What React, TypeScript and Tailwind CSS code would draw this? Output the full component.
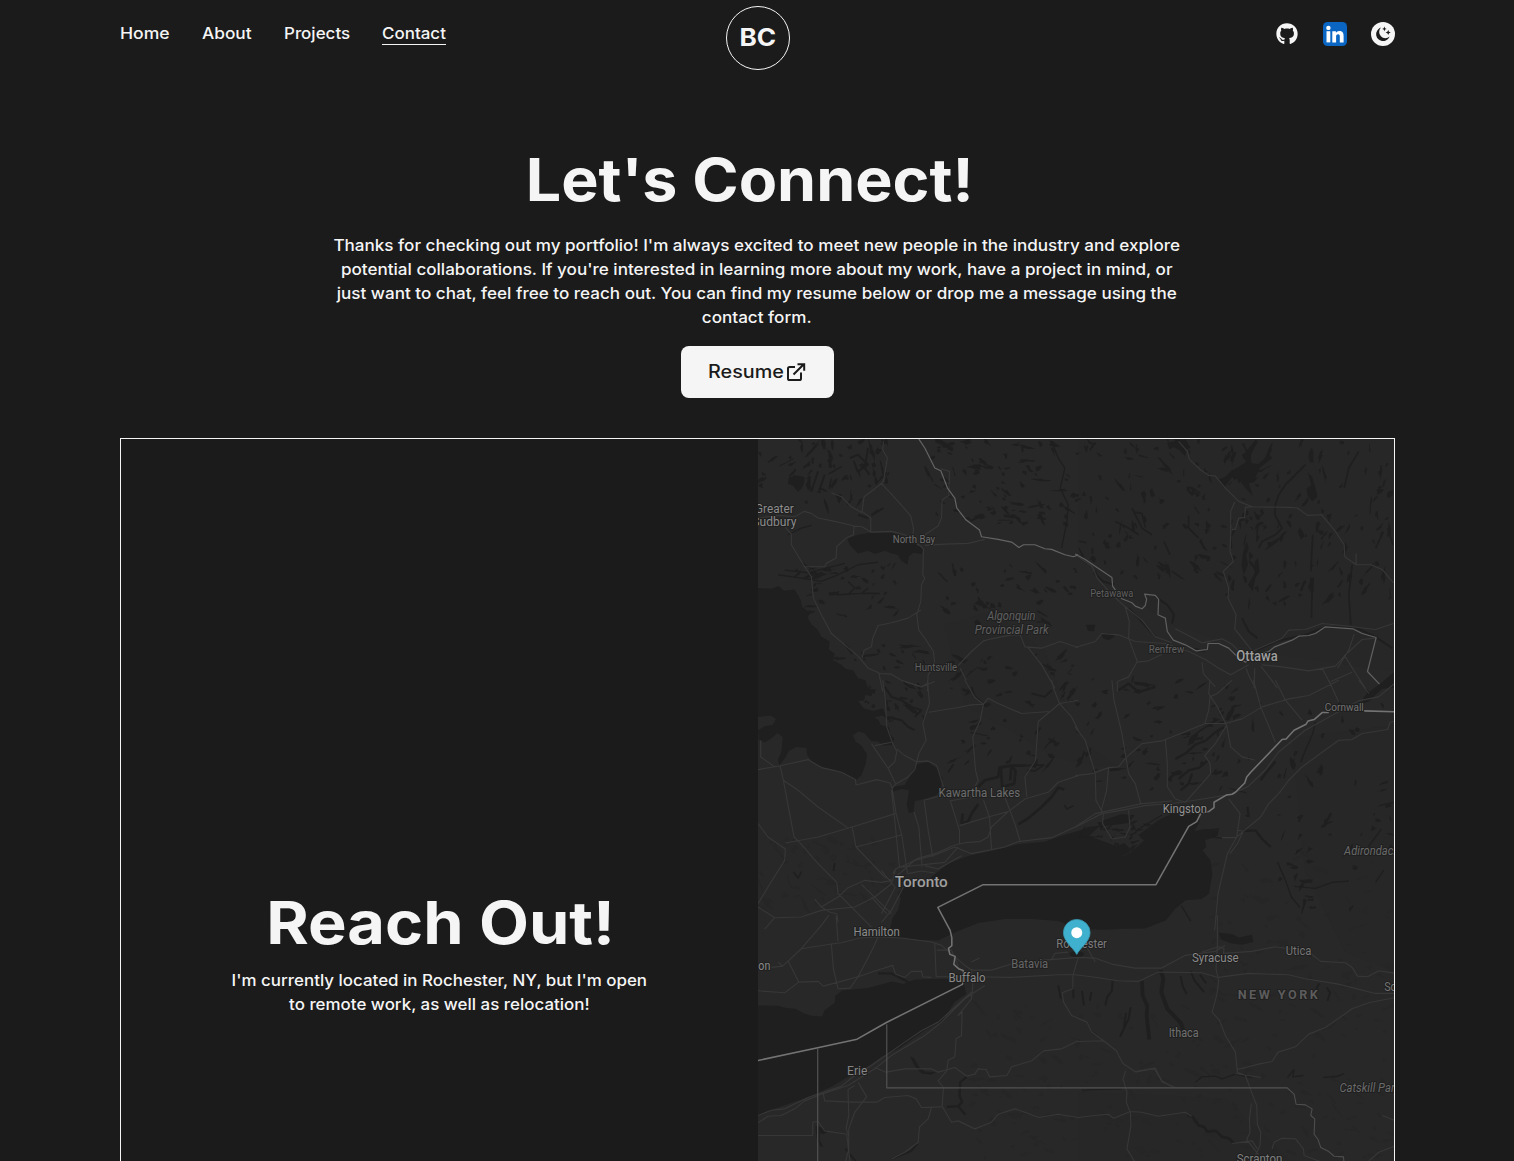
import React from "react";
import { FaGithub } from "react-icons/fa";

const OFFSETS = {
  nw: "translate(0 0)",
  ne: "translate(951 0)",
  w: "translate(0 726)",
  e: "translate(951 726)",
  sw: "translate(0 1431)",
  se: "translate(951 1431)",
};
type Region = keyof typeof OFFSETS;

const WATER = "#1f1f1f";

const waterShapes: [Region, string][] = [
  ["w", "M0 -276L40 -274L62 -282L78 -268L110 -272L128 -240L132 -220L150 -206L150 -186L160 -168L180 -150L190 -130L215 -116L212 -92L230 -80L225 -60L250 -46L262 -34L285 -30L300 -6L322 0L328 20L345 30L340 48L322 44L318 60L300 62L316 84L346 92L374 84L384 104L350 110L368 134L392 140L396 160L408 176L402 194L370 196L362 184L340 182L318 158L300 154L284 166L292 184L310 196L327 222L323 250L310 285L293 300L262 280L225 267L195 262L160 242L148 225L145 203L115 200L92 212L82 232L64 256L60 238L70 215L74 170L58 158L44 172L22 186L2 180L0 150L20 138L44 134L54 116L38 106L0 110Z"],
  ["w", "M402 320L440 314L476 252L510 245L536 264L553 295L548 322L535 345L505 355L470 362L466 395L452 398L446 372L453 330L430 326L405 334Z"],
  ["nw", "M268 302L300 290L330 285L400 283L462 305L480 322L496 334L490 348L466 344L452 356L448 380L430 368L418 350L400 346L380 338L350 348L330 338L300 346L276 322Z"],
  ["nw", "M92 120L110 112L138 116L140 130L132 150L120 162L104 142L90 138Z"],
  ["w", "M396 745L404 712L420 690L428 655L420 640L440 612L500 606L545 570L572 548L640 524L700 512L780 492L860 484L905 468L960 452L991 440L1020 436L1035 420L1090 402L1130 404L1110 428L1020 440L992 468L1050 488L1070 500L1098 488L1120 510L1084 532L1120 514L1158 480L1140 465L1200 420L1240 400L1290 404L1318 396L1324 424L1308 452L1340 446L1380 452L1378 466L1340 480L1344 500L1332 510L1356 540L1362 580L1352 640L1330 656L1282 660L1252 684L1222 720L1160 744L1096 745L1040 748L960 746L900 722L820 716L740 716L660 728L600 752L540 780L480 778L420 772L375 766L366 752Z"],
  ["sw", "M0 270L60 271L84 278L112 280L138 294L160 301L192 303L199 285L230 262L232 242L252 225L330 218L402 198L436 206L470 192L560 190L616 200L624 236L590 260L570 290L552 318L498 346L424 398L370 424L330 452L290 472L222 512L180 532L130 552L60 576L20 592L0 602Z"],
  ["e", "M858 72L866 50L888 30L920 6L960 -28L960 22L920 26L896 48L880 64Z"],
  ["ne", "M430 124L448 118L468 98L488 88L512 72L504 50L520 30L540 6L548 10L526 50L528 76L548 78L582 50L590 60L550 92L536 128L520 134L532 174L508 148L490 124L470 118L445 150Z"],
  ["ne", "M275 14L330 4L346 30L318 40L296 28L282 34Z"],
  ["ne", "M514 310L520 330L512 352L518 380L505 410L498 382L504 340Z"],
  ["ne", "M548 360L552 400L540 420L532 460L518 440L530 420L540 400L538 372Z"],
  ["ne", "M704 420L716 418L714 462L705 464Z M694 150L718 140L726 176L710 190L696 170Z"],
  ["ne", "M78 590L100 584L120 594L100 606L84 600Z M32 560L60 560L56 580L38 578Z"],
  ["se", "M430 52L470 56L490 66L530 58L534 80L500 88L470 84L436 72Z"],
  ["sw", "M456 422L468 428L484 456L500 468L534 470L520 478L490 474L470 452Z M172 632L190 636L210 648L196 656L186 652L184 672L196 694L186 692L176 668Z M170 500L200 510L200 500Z"],
];

const lakeStrokes: [Region, number, string][] = [
  ["se", 11, "M200 196L202 240L216 272L214 300L222 372"],
  ["se", 12, "M256 164L264 190L258 230L276 280L316 322L324 344"],
  ["se", 6, "M112 196L110 226L96 244L90 270 M316 182L322 212L334 236 M346 168L358 196L386 230 M374 178L392 204 M166 276L160 310L134 364 M152 292L146 336 M20 226L26 270 M48 230L44 256 M754 216L764 232L756 256 M732 204L722 220"],
  ["sw", 7, "M360 174L400 174L440 194L452 202 M606 500L604 540L612 560L600 572L622 598 M626 484L606 500 M600 572L566 574"],
  ["se", 4, "M20 524L140 520 M360 500L380 484L420 482L440 490L480 476L530 486 M636 486L656 462L652 484L684 480 M744 486L790 482L806 474L780 484"],
  ["se", 8, "M336 598L352 604L370 630L386 634L396 648L422 646L440 664L460 668L476 684"],
  ["sw", 6, "M400 730L430 718L460 706L478 684 M262 700L290 734L300 746 M900 210L908 250 M944 214L946 248"],
  ["w", 8, "M614 400L610 430L630 424L640 400L660 372 M780 432L810 414L850 380L880 350L900 322L918 328 M660 320L680 300L720 290L724 262L760 256L800 256 M728 262L732 320L768 310L772 272L760 256L756 300"],
  ["w", 5, "M918 374L926 386L946 376 M800 256L858 254L830 272L806 270 M570 276L586 252 M640 20L650 48L680 74 M106 574L120 594L130 574 M230 548L226 572"],
  ["e", 7, "M300 236L330 220L362 192L390 182L420 156L446 140 M310 296L340 270L372 262L398 240 M316 330L340 310L350 280 M500 452L540 450L560 476L586 500 M600 244L570 280L556 300 M516 380L520 410 M130 30L160 10L190 36L240 20"],
  ["e", 4, "M720 124L712 160L690 210L676 246 M606 544L630 600L648 650L674 682 M656 618L720 624L770 606L820 602 M318 676L346 722 M878 500L918 446 M924 570L900 606 M180 452L240 416L260 404 M30 440L10 470L60 470 M390 450L430 446L410 470L440 474"],
  ["ne", 5, "M690 80L660 110L630 140L610 170L600 200L598 230L620 270L600 290L560 310L550 330 M170 210L190 250L200 270L230 290 M176 222L200 226L210 268 M120 250L160 270L190 290 M266 310L284 350 M340 232L340 270L370 300 M850 40L820 90L806 150 M936 270L946 300L952 320 M712 290L706 400 M710 460L708 540 M830 380L820 470L826 560"],
  ["ne", 6, "M56 404L84 430L116 440 M160 510L190 540L220 574L240 594 M246 480L276 500L296 530L290 556 M500 540L520 580L546 600 M356 632L390 640 M546 636L600 610L690 590L750 566L850 572L900 596L950 630"],
  ["nw", 4, "M880 10L900 60L920 90L906 150L930 200L926 250L910 330 M60 410L130 420L190 430L240 410L300 380L360 372 M80 396L150 404L260 376 M90 290L130 270L160 262 M240 470L310 466L330 450 M270 430L290 450L270 470"],
  ["nw", 6, "M276 60L300 50L330 80L300 100 M330 30L320 90L334 110 M150 130L160 160L180 100 M200 110L186 150L206 160 M360 216L340 232L376 210 M300 230L330 240"],
  ["w", 6, "M430 60L460 80L490 90L470 110 M390 110L430 120L450 140L470 150 M820 40L860 50L880 30 M380 20L400 50L430 60"],
];

const roads: [Region, string][] = [
  ["nw", "M0 240L60 232L110 236L138 220L160 226L180 240L230 250L288 264L312 266L338 282L400 280L440 290L490 326L496 334L494 410L500 420L490 440L488 490L476 530L482 576L500 600L526 640L530 680L510 710L508 760 M78 240L84 270L100 288L100 320L136 380L160 416L166 480L190 530L220 586L300 654L330 690L362 704L374 760 M376 10L374 36L388 60L376 130L370 136L420 190L458 234L466 270L464 300L480 322 M370 136L350 152L318 176L312 220L338 240L338 282 M220 164L250 176L280 206L312 224 M288 264L286 290L264 300L236 326L234 360L204 376L200 386L138 386 M500 290L540 264L550 240L552 186L572 172L574 100L548 92 M500 322L560 318L630 316L680 304 M488 516L450 540L400 554L360 562L344 600L340 626L318 636L312 660 M362 706L400 708L430 726L490 746L530 730 M600 682L640 640L676 608L700 602L760 590L786 590L800 626L850 630L905 610L960 628 M808 626L850 680L890 750 M606 690L624 726"],
  ["ne", "M310 10L336 40L342 64L376 96L400 112L420 114L450 150L490 190L530 206L640 208L666 210L696 232L738 230L780 280L806 320L808 356L842 380L886 380L920 394L954 434 M842 380L842 346 M478 192L466 220L466 290L464 340L474 370L444 400L460 450L458 480L482 530L478 572L500 600L530 638 M534 206L510 208L508 238L490 240L480 274L470 274 M0 628L60 610L80 586L130 590L180 610L270 616L340 640L390 664L430 690L466 710L520 680 M0 350L50 384L66 420L110 470L150 506L200 546L240 596L290 614 M150 506L162 550L160 600L186 670L160 716L126 730L126 760 M186 672L220 668L260 648 M300 572L380 614L440 602L470 618L500 650 M530 640L620 600L640 576L690 574L740 556L800 562L900 574L954 556 M560 680L620 686L700 698L780 684L810 650L860 604L900 600 M380 672L384 706L420 746 M512 690L522 716L540 750 M538 690L536 750 M556 684L584 720L606 750 M740 690L766 740 M766 730L830 702 M806 650L850 720L870 750 M836 588L820 636L786 690"],
  ["w", "M374 0L382 60L386 140L404 190L416 214L410 244L390 264L412 310 M508 0L514 70L494 130L504 180L482 220L470 268L450 290L412 312L402 324L414 400L432 470L448 580 M440 4L490 20L506 10 M512 96L600 82L640 74L676 72 M620 0L650 52L676 72L666 120L644 170L652 270L660 300L650 320 M676 72L690 54L720 70L790 100L876 94L904 70L960 60 M904 70L888 30L880 0 M904 70L940 110L960 150 M876 94L840 124L832 240L800 290L806 350 M340 190L360 220L390 264 M400 186L350 196 M416 206L440 226L474 244L510 242L536 256L556 320 M0 268L60 258L150 238L190 262L250 276L292 298L294 314L356 298L396 308L402 324 M8 180L8 230L50 260 M66 256L76 300L108 470L128 490L180 550L236 606L240 640 M76 300L120 330L180 380L268 442 M82 488L180 470L282 440L412 400 M282 440L294 500L380 590L400 600 M294 500L430 464 M0 430L30 470L82 506L80 540L30 620L0 670 M0 680L50 712L130 710L190 690L290 680L350 650L400 610L412 570 M400 330L410 420L424 560 M468 396L482 440L492 560 M498 360L510 450L524 530 M498 360L540 348 M576 360L604 450L604 490 M574 362L640 350 M676 360L694 410L700 506 M740 350L770 430L786 484 M404 580L412 566L450 550L480 534L530 520L590 494L628 486L664 484L690 470L700 440L750 394L800 356L870 336L900 306L960 286 M604 436L690 410L750 394 M430 560L560 546L600 500 M450 580L490 572L530 578 M500 556L540 566L610 526 M170 656L190 680L212 694L236 700L240 726 M190 680L240 650L270 622L320 600L370 606L400 600 M240 640L290 690L340 740 M310 612L400 700 M370 570L410 620 M340 650L386 700 M50 712L20 746 M412 620L370 700 M436 620L400 690L370 726"],
  ["w", "M412 590L470 540L530 524L590 500L640 520L740 500L780 484L880 472L960 436L1031 400L1100 388L1160 376L1250 368L1310 360L1420 342L1470 318L1520 270L1560 216L1640 150L1720 106L1800 62L1860 50L1908 10"],
  ["e", "M0 286L50 280L100 262L130 260L152 232L200 190L260 182L390 130L450 130L500 116L560 80L640 56L700 46L790 0 M0 140L30 180L60 280L62 360L84 400L82 430L110 476L150 470L164 440L160 390 M100 262L94 330L78 390 M110 0L116 60L140 160L152 232L160 280L180 310L196 370 M270 176L276 250L276 320L300 356L330 366L380 310L406 280L404 250L388 226L420 190L454 136L426 80L400 40L404 0 M426 40L470 0 M388 130L400 90L404 50L426 40 M454 136L466 200L500 230L540 240 M534 0L556 80L600 186 M600 0L630 60L680 120 M760 0L790 66 M850 0L880 40 M460 356L494 400L484 470L456 520L442 580L428 640L418 750 M484 470L510 448L556 410L580 370L610 340L640 300L680 260L740 216L790 180L830 178L860 160L936 148L944 126L960 122 M484 450L504 452L486 490L464 520 M440 472L484 472 M0 440L60 400L200 370L290 362"],
  ["sw", "M40 156L74 152L130 100L220 86L250 82L306 68L360 64L430 68L520 80L550 90L620 150L640 164L700 164L760 146L860 134L960 126L1010 128L1060 146L1130 158L1210 158L1280 120L1370 108L1400 90 M74 152L60 140 M90 136L122 200L80 232L0 226 M122 200L180 198L196 212L300 184L360 164L404 150L412 176L440 186L460 168L490 168L494 184L520 186 M220 86L226 160L240 220L276 218L300 184L344 100L360 64 M234 0L240 78 M130 100L190 30L212 0 M530 86L534 184L640 184L760 186L900 178L950 178L1000 184L1080 196L1140 198L1200 170L1330 172L1380 186L1470 174L1590 178L1640 190L1740 206L1850 234L1908 234 M536 104L580 104L600 150 M640 140L664 128 M640 160L644 210L640 250L600 300L612 290L610 360L594 370L590 424L570 434L566 466L540 496L556 516L552 572L580 620L600 616L650 640L700 620L720 596L770 580L800 590L842 606L900 596L960 606L1010 600L1050 596L1066 608L1116 588L1150 590L1200 602L1280 590L1300 602 M640 230L540 320L490 346L440 380L340 450L290 480L250 512L150 546L80 580L40 584L0 600 M680 210L620 250L550 320L500 360L400 420L350 460L270 510L190 536L140 556L110 580L70 600L30 602L0 622 M350 456L384 470L440 460L520 460L540 470L590 456L626 482L650 476L660 460L684 462L694 484L746 480L760 454L820 436L856 406L910 400L960 376 M300 500L326 544L290 590L272 640L272 700L262 740 M290 510L270 522L272 600L264 640L272 660 M196 536L200 556L280 560L356 560L380 546L450 540L474 550L490 576L550 574 M520 576L510 610L484 634L480 680L440 710L400 730 M0 660L164 660L164 620L180 618L200 646L266 656L276 740 M960 126L944 180L944 220L912 232L916 260L940 300L986 320L1000 350L1036 376L1074 406L1094 444L1130 468L1180 460L1190 462L1210 496L1240 514 M1036 376L960 378 M1102 466L1094 490L1106 530L1104 560L1116 590L1118 630L1106 700L1130 740 M880 132L890 114L930 110"],
  ["se", "M426 0L426 90L422 160L430 196L424 240L410 290L432 314L450 360L480 410L486 470L510 480L536 550L544 570L546 626L556 650L554 690L540 720 M380 110L430 94L446 100L444 114L530 108L600 94L640 100L700 110L736 138L810 142L830 156L846 182L876 184L910 166L960 174 M486 462L550 446L590 438L608 410L660 394L700 356L750 336L830 280L880 262L960 246 M480 474L556 486 M528 564L522 610L524 650L514 672L550 718 M470 684L530 676L546 700 M590 700L596 680L620 668L660 670L684 700L686 720L740 740 M180 470L240 458L262 500L300 516 M880 736L910 710L956 692 M920 600L956 614 M30 88L60 140"],
];

const boundaries: [Region, number, string, string][] = [
  ["nw", 3.6, "#646464", "M480 0L500 30L530 90L548 98L568 150L590 180L596 210L624 246L664 276L670 296L720 304L760 312L782 328L796 320L830 320L860 332L880 334L920 350L946 356L960 350"],
  ["ne", 3.6, "#606060", "M0 348L30 364L110 418L112 444L126 464L140 482L170 494L180 504L200 512L210 502L214 484L208 468L240 472L250 484L248 530L270 540L276 580L294 606L330 620L362 638L396 634L398 616L430 616L460 630L480 650L510 672L540 650L580 640L598 626L650 606L670 594L700 592L720 586L750 566L832 572L860 586L902 598L876 700L912 738"],
  ["e", 4.6, "#737373", "M866 92L960 95 M760 97L740 97L716 118L698 122L692 132L656 150L632 176L620 178L526 276L514 290L508 308L480 336L470 342L454 344L416 366L416 382L400 394L376 400L364 424L340 438L242 613L-276 613L-412 681L-375 750L-370 772L-370 796L-380 804L-376 822L-360 828L-364 852L-348 866L-336 870L-334 884L-338 912L-566 1026L-654 1076L-772 1102L-951 1140"],
  ["sw", 3.6, "#525252", "M179 398L179 740 M386 326L386 517L1586 517"],
  ["se", 3.2, "#4e4e4e", "M634 516L656 536L662 566L690 568L710 580L706 600L718 610L716 656L728 672L736 696L760 708L776 722L804 724L806 745"],
];

type Label = [Region, string, number, number, number, number, string, boolean?];
const labels: Label[] = [
  ["nw", "Greater", -9, 107, 224, 36, "#8c8c8c"],
  ["nw", "Sudbury", -17, 115, 264, 36, "#8c8c8c"],
  ["nw", "North Bay", 404, 531, 315, 32, "#6e6e6e"],
  ["nw", "Algonquin", 687, 832, 545, 36, "#606060", true],
  ["nw", "Provincial Park", 650, 871, 588, 36, "#606060", true],
  ["nw", "Huntsville", 470, 597, 699, 32, "#606060"],
  ["ne", "Petawawa", 45, 174, 476, 31, "#5e5e5e"],
  ["ne", "Renfrew", 220, 327, 644, 32, "#606060"],
  ["ne", "Ottawa", 483, 607, 668, 43, "#a0a0a0"],
  ["w", "Toronto", 410, 569, 620, 46, "#a0a0a0"],
  ["w", "Kawartha Lakes", 541, 786, 350, 37, "#6c6c6c"],
  ["e", "Cornwall", 748, 865, 93, 32, "#727272"],
  ["e", "Kingston", 262, 395, 399, 37, "#929292"],
  ["e", "Adirondac.", 806, 962, 525, 36, "#6a6a6a", true],
  ["sw", "Hamilton", 286, 425, 62, 37, "#8a8a8a"],
  ["sw", "on", 1, 37, 164, 37, "#8a8a8a"],
  ["sw", "Buffalo", 571, 682, 200, 38, "#8a8a8a"],
  ["sw", "Batavia", 759, 870, 158, 37, "#666666"],
  ["sw", "Erie", 267, 328, 480, 38, "#848484"],
  ["sw", "Rochester", 894, 1046, 99, 37, "#7c7c7c"],
  ["se", "Syracuse", 350, 490, 139, 37, "#8a8a8a"],
  ["se", "Utica", 631, 708, 119, 37, "#747474"],
  ["se", "Sch", 926, 980, 226, 37, "#747474"],
  ["se", "Ithaca", 280, 370, 365, 37, "#707070"],
  ["se", "Catskill Park", 792, 974, 530, 36, "#6a6a6a", true],
  ["se", "Scranton", 484, 621, 742, 37, "#808080"],
];

/* Scattered small lakes, seeded so that every render draws the same map. */
function makePonds(count: number, x0: number, y0: number, x1: number, y1: number, seed: number, lean: number) {
  let s = seed;
  const rnd = () => {
    s = (s * 1664525 + 1013904223) % 4294967296;
    return s / 4294967296;
  };
  let d = "";
  for (let i = 0; i < count; i++) {
    const cx = x0 + rnd() * (x1 - x0);
    const cy = y0 + rnd() * (y1 - y0);
    const len = 5 + rnd() * rnd() * 26;
    const wid = 2 + rnd() * 5;
    const a = lean + (rnd() - 0.5) * 1.6;
    for (let k = 0; k < 10; k++) {
      const t = (k / 10) * Math.PI * 2;
      const j = 0.35 + rnd() * 1.2;
      const px = Math.cos(t) * len * j;
      const py = Math.sin(t) * wid * j;
      const x = cx + px * Math.cos(a) - py * Math.sin(a);
      const y = cy + px * Math.sin(a) + py * Math.cos(a);
      d += `${k ? "L" : "M"}${x.toFixed(0)} ${y.toFixed(0)}`;
    }
    d += "Z";
  }
  return d;
}

const ponds = [
  makePonds(60, 0, 0, 400, 210, 11, 1.9),
  makePonds(90, 510, 10, 960, 260, 23, 0.5),
  makePonds(120, 960, 0, 1500, 420, 37, 1.0),
  makePonds(120, 1400, 10, 1900, 500, 51, 1.9),
  makePonds(40, 100, 380, 420, 540, 67, -0.2),
  makePonds(40, 540, 380, 960, 560, 71, 0.5),
  makePonds(50, 240, 620, 500, 860, 83, 0.6),
  makePonds(60, 560, 640, 960, 980, 97, -0.3),
  makePonds(80, 960, 720, 1450, 1060, 103, -0.5),
  makePonds(24, 1440, 760, 1900, 1150, 109, 1.5),
  makePonds(36, 1560, 1000, 1900, 1440, 113, -0.6),
  makePonds(30, 1000, 1150, 1180, 1240, 127, -0.5),
];

const lowlandPatches = makePonds(170, 1350, 1240, 1900, 2160, 131, 0.2) + makePonds(120, 640, 1700, 1340, 2160, 139, 0.3) + makePonds(60, 0, 1200, 400, 1420, 149, 0.6);

function RegionMap() {
  return (
    <svg className="block h-full w-full" viewBox="0 3 1908 2166" preserveAspectRatio="xMinYMin slice" role="img" aria-label="Map of Rochester, New York">
      <rect x="0" y="0" width="1912" height="2172" fill="#282828" />
      <path d="M960 3H1908V700L1500 640L1240 560L960 360Z M560 560L700 520L860 640L960 900L1100 1000L900 960L620 800Z" fill="#262626" opacity="0.6" />
      <path d="M1600 900L1908 860V1600L1760 1540L1640 1300Z M960 1960L1400 1980L1600 2169H960Z" fill="#262626" opacity="0.6" />
      <path d={lowlandPatches} fill="#262626" />
      {ponds.map((d, i) => (
        <path key={i} d={d} fill={WATER} />
      ))}
      {waterShapes.map(([r, d], i) => (
        <path key={i} d={d} transform={OFFSETS[r]} fill={WATER} />
      ))}
      {lakeStrokes.map(([r, w, d], i) => (
        <path key={i} d={d} transform={OFFSETS[r]} fill="none" stroke={WATER} strokeWidth={w} strokeLinejoin="bevel" />
      ))}
      {roads.map(([r, d], i) => (
        <path key={i} d={d} transform={OFFSETS[r]} fill="none" stroke="#373737" strokeWidth="3.4" strokeLinejoin="round" />
      ))}
      {boundaries.map(([r, w, c, d], i) => (
        <path key={i} d={d} transform={OFFSETS[r]} fill="none" stroke={c} strokeWidth={w} strokeLinejoin="round" />
      ))}
      <g fontFamily="Roboto, 'Liberation Sans', sans-serif" fontWeight="400" stroke="#1f1f1f" strokeWidth="6" strokeLinejoin="round" paintOrder="stroke">
        {labels.map(([r, text, x0, x1, y, size, color, italic]) => (
          <text
            key={text}
            x={x0}
            y={y}
            transform={OFFSETS[r]}
            fontSize={size}
            fill={color}
            fontWeight={size > 42 ? 500 : 400}
            textLength={x1 - x0}
            lengthAdjust="spacingAndGlyphs"
            fontStyle={italic ? "italic" : "normal"}
          >
            {text}
          </text>
        ))}
        <text x="487" y="251" transform={OFFSETS.se} fontSize="38" fontWeight="700" fill="#5c5c5c" textLength="240">
          NEW YORK
        </text>
      </g>
      <g transform="translate(955.5 1443)">
        <ellipse cx="0" cy="104" rx="22" ry="9" fill="#000" opacity="0.22" />
        <path d="M0 105C-8 88-40 66-40 40A40 40 0 0 1 40 40C40 66 8 88 0 105Z" fill="#3FB1CE" stroke="#3695ad" strokeWidth="2.5" />
        <circle cx="0" cy="40" r="16.5" fill="#fff" />
      </g>
    </svg>
  );
}

function MoonIcon() {
  return (
    <svg className="size-6" viewBox="0 0 24 24">
      <circle cx="12" cy="12" r="12" fill="#f5f5f5" />
      <g fill="#1b1b1b">
        <path d="M10 5.6A6.9 6.9 0 1 0 18.6 14.4A5.9 5.9 0 0 1 10 5.600Z" />
        <path d="M13.4 4.6L14.1 6.2L15.7 6.9L14.1 7.6L13.4 9.2L12.7 7.6L11.1 6.9L12.7 6.200Z" />
        <path d="M17.2 7.9L18 9.7L19.8 10.5L18 11.3L17.2 13.1L16.4 11.3L14.6 10.5L16.4 9.700Z" />
      </g>
    </svg>
  );
}

function LinkedInIcon() {
  return (
    <svg className="size-6" viewBox="0 0 24 24">
      <rect width="24" height="24" rx="4.5" fill="#0a66c2" />
      <g fill="#fff">
        <circle cx="5.4" cy="5.9" r="2.2" />
        <path d="M3.500 9.200H7.300V20.400H3.500Z" />
        <path d="M9.300 9.200H12.900V10.800C13.500 9.700 14.700 8.900 16.400 8.900C19.800 8.900 20.600 11.100 20.600 14V20.400H16.800V14.800C16.800 13.400 16.700 12.200 15.100 12.200C13.500 12.200 13.100 13.400 13.100 14.800V20.400H9.300Z" />
      </g>
    </svg>
  );
}

function ExternalIcon() {
  return (
    <svg className="size-6" viewBox="0 0 24 24" fill="none" stroke="#1b1b1b" strokeWidth="2">
      <path d="M11 7H5.600A1.600 1.600 0 0 0 4 8.600V18.400A1.600 1.600 0 0 0 5.600 20H15.400A1.600 1.600 0 0 0 17 18.400V12.500" />
      <path d="M9.500 14.500L20 4M13.500 4.200H20.200V10.800" />
    </svg>
  );
}

export default function App() {
  return (
    <div className="flex h-[1161px] w-full flex-col overflow-hidden bg-[#1b1b1b] px-[120px] font-['Inter',sans-serif] font-medium text-[#f5f5f5]">
      <header className="mr-[-1px] grid h-[76px] grid-cols-3 items-start">
        <nav className="flex gap-8 pt-[21px] text-base leading-[25px] whitespace-nowrap">
          <a className="w-[50px]">
            <span className="inline-block origin-left scale-x-[1.1]">Home</span>
          </a>
          <a className="w-[50px]">
            <span className="inline-block origin-left scale-x-[1.08]">About</span>
          </a>
          <a className="w-[66px]">
            <span className="inline-block origin-left scale-x-[1.06]">Projects</span>
          </a>
          <a className="h-6 w-16 border-b border-[#f5f5f5]">
            <span className="inline-block origin-left scale-x-[1.06]">Contact</span>
          </a>
        </nav>
        <div className="mt-1.5 flex size-16 items-center justify-center justify-self-center rounded-full border border-[#f5f5f5] text-2xl font-bold">
          <span className="scale-x-[1.09]">BC</span>
        </div>
        <div className="flex items-center justify-end gap-6 pt-[22px]">
          <span className="flex size-6 items-center justify-center">
            <FaGithub size={22} />
          </span>
          <LinkedInIcon />
          <MoonIcon />
        </div>
      </header>

      <section className="mt-20 flex flex-col items-center">
        <h1 className="mr-[14px] scale-x-[1.063] text-[59px] leading-[60px] font-bold whitespace-nowrap">Let's Connect!</h1>
        <p className="mt-[23px] flex scale-x-[1.067] flex-col items-center text-base leading-6 whitespace-nowrap">
          <span>Thanks for checking out my portfolio! I'm always excited to meet new people in the industry and explore</span>
          <span>potential collaborations. If you're interested in learning more about my work, have a project in mind, or</span>
          <span>just want to chat, feel free to reach out. You can find my resume below or drop me a message using the</span>
          <span>contact form.</span>
        </p>
        <a className="mt-[17px] flex h-[52px] w-[153px] items-center rounded-lg bg-[#f5f5f5] pl-[27px] text-lg text-[#1b1b1b]">
          <span className="w-[76px]">
            <span className="inline-block origin-left scale-x-[1.1]">Resume</span>
          </span>
          <ExternalIcon />
        </a>
      </section>

      <section className="mt-10 mr-[-1px] grid h-[900px] shrink-0 grid-cols-2 border border-[#f5f5f5]">
        <div className="flex flex-col items-center pt-[454px]">
          <h2 className="ml-0.5 scale-x-[1.1] text-[59px] leading-[60px] font-bold whitespace-nowrap">Reach Out!</h2>
          <p className="mt-[15px] flex scale-x-[1.058] flex-col items-center text-base leading-6 whitespace-nowrap">
            <span>I'm currently located in Rochester, NY, but I'm open</span>
            <span>to remote work, as well as relocation!</span>
          </p>
        </div>
        <div className="h-[722px] overflow-hidden">
          <RegionMap />
        </div>
      </section>
    </div>
  );
}
